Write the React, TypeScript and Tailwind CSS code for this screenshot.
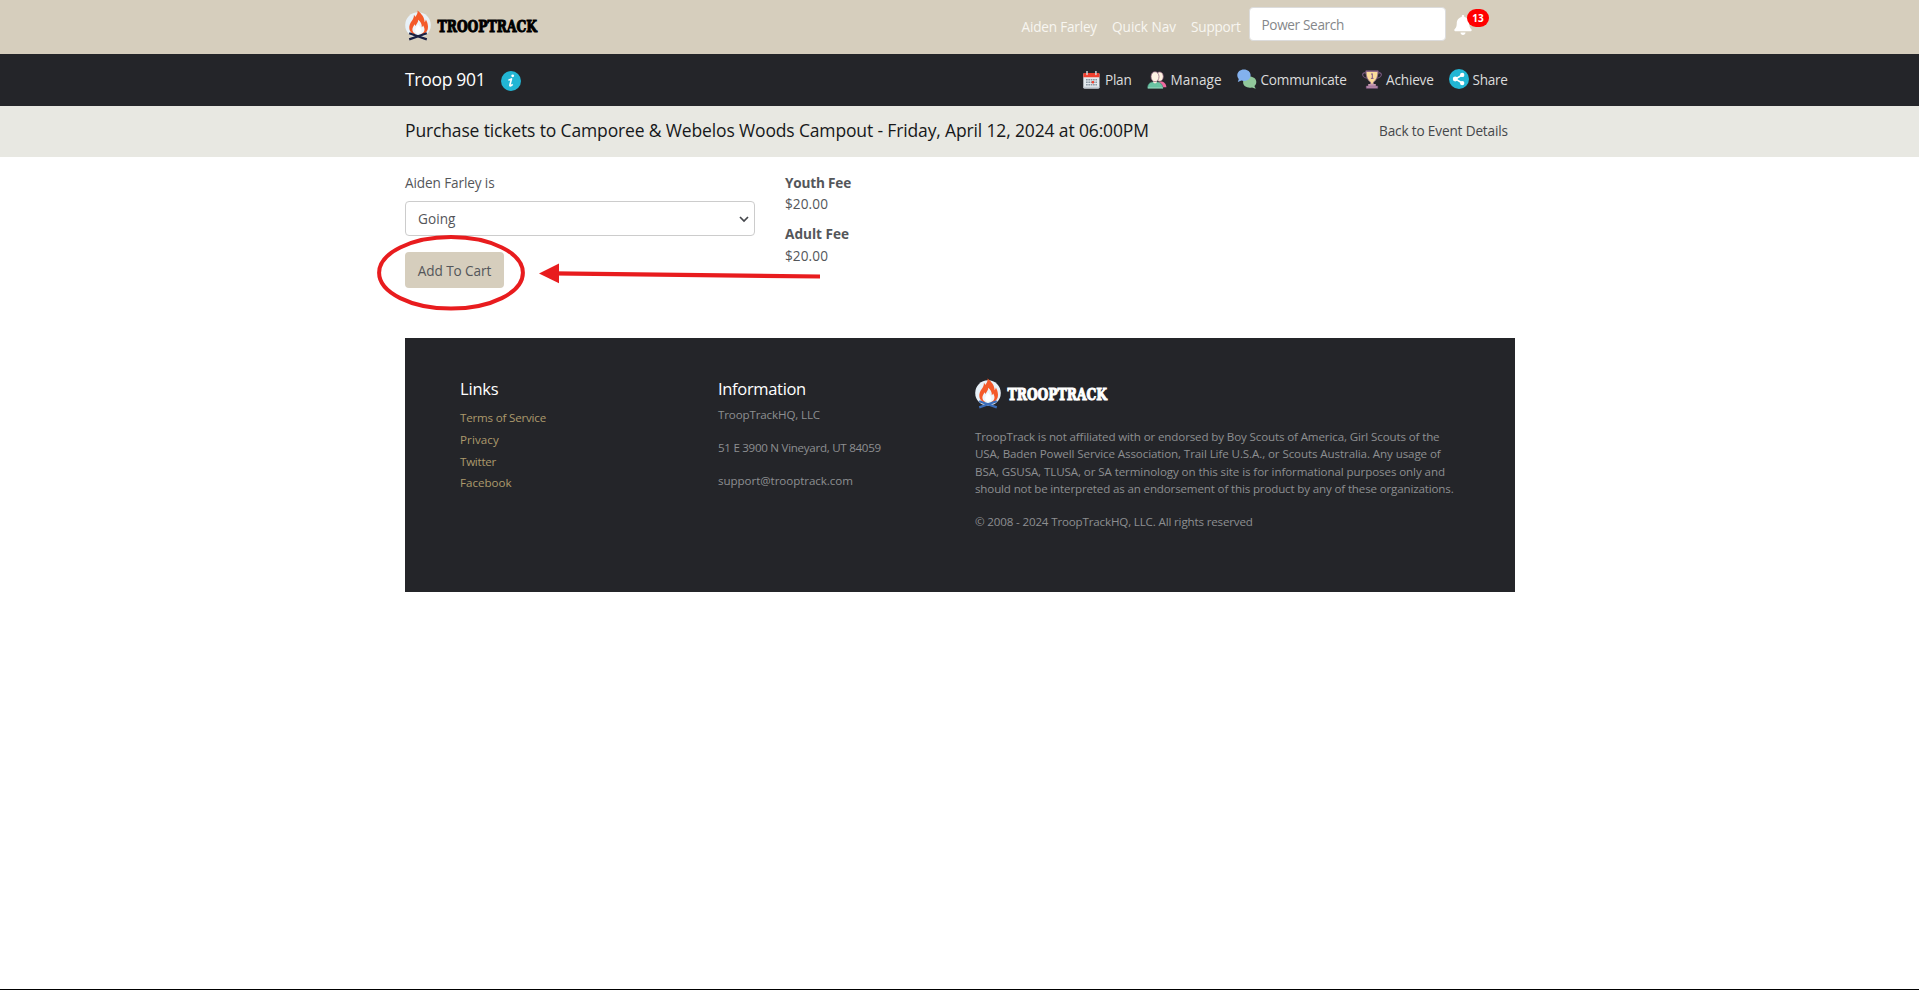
import React from "react";
import { FaBell } from "react-icons/fa";

function Logo({ ink, logs }: { ink: string; logs: string }) {
  return (
    <svg width="140" height="34" viewBox="0 0 140 34" className="block shrink-0">
      <circle cx="13" cy="17" r="12.8" fill="#e8f1f8" />
      <path
        d="M12.6 2.4c.4 2.8-1.2 4.8-2.4 6.7-.3-1.1-.7-1.6-1.3-2 .2 2.3-.8 4-2 5.700-1.700 2.300-3.100 5-2.500 8.200.3 1.900 1.600 4 3.800 4.900h10.700c2.400-1.300 4.200-3.700 4.100-7.200-.1-2.800-1-5-2.100-7.200-.2 1.200-.6 2-1.300 2.700.1-4.600-3.100-8.700-7-11.800Z"
        fill="#f45a2a"
      />
      <path
        d="M13.200 11.800c.2 2.400-1.800 4.100-2.700 6.200-.4-.6-.6-1.100-.7-1.800-1.500 2-2.900 4.300-2.300 6.400.4 1.700 1.600 2.900 3.200 3.400h5.500c2-.7 3.300-2.300 3.300-4.500 0-1.500-.6-2.900-1.300-4.100-.4.900-.8 1.400-1.400 1.800.2-3.100-1.200-5.600-3.600-7.400Z"
        fill="#eef5fa"
      />
      <path d="M13.200 16.500c-2.200 3-3.600 5.200-2.900 7 .5 1.400 1.700 2 3 2s2.700-.7 3.100-2.200c.5-1.900-1.200-4-3.200-6.800Z" fill="#fff" />
      <path d="M4.200 25.200 21.800 31.400M21.800 25.200 4.200 31.400" stroke={logs} strokeWidth="2.200" />
      <text
        x="32.500"
        y="23.800"
        textLength="99.500"
        lengthAdjust="spacingAndGlyphs"
        fill={ink}
        stroke={ink}
        strokeWidth="1.150"
        className="font-['DejaVu_Serif'] text-[17.500px] font-bold"
      >
        TROOPTRACK
      </text>
    </svg>
  );
}

const InfoIcon = () => (
  <svg width="20" height="20" viewBox="0 0 20 20">
    <circle cx="10" cy="10" r="10" fill="#22b6d4" />
    <circle cx="11.700" cy="4.800" r="1.400" fill="#fff" />
    <path d="M7.400 9.100c1.300-.3 2.200-.8 3.100-1.200L8.900 14c-.3 1.400.5 1.600 2.800-.6" fill="none" stroke="#fff" strokeWidth="1.600" strokeLinejoin="round" />
  </svg>
);

const CalendarIcon = () => (
  <svg width="17" height="18" viewBox="0 0 17 18">
    <rect x=".3" y="2" width="16.200" height="15.500" rx="1.400" fill="#e4eaee" />
    <path d="M.3 6.200V3.200C.3 2.400.9 1.900 1.600 1.900h13.600c.7 0 1.300.5 1.300 1.300v3Z" fill="#f0402f" />
    <path d="M.3 15.800h16.200v.6c0 .7-.5 1.200-1.200 1.200H1.500c-.7 0-1.200-.5-1.200-1.200Z" fill="#c3ccd3" />
    <path d="M4 .4v3.200M12.900.4v3.200" stroke="#cfd8dd" strokeWidth="1.500" strokeLinecap="round" />
    <path d="M3 8.700h11M3 11.200h11M3 13.700h11" stroke="#8a97a2" strokeWidth="1.500" strokeDasharray="1.700 .65" />
    <rect x="8.700" y="10.100" width="2.300" height="2.300" fill="#f0402f" />
  </svg>
);

const PeopleIcon = () => (
  <svg width="20" height="18" viewBox="0 0 20 18">
    <path d="M9 16c0-4 2-5.600 4.800-5.600s5.400 2 5.600 5.800H9Z" fill="#ef6aa0" />
    <ellipse cx="12.700" cy="5.600" rx="3.600" ry="4.700" fill="#fdf0df" stroke="#8a5a78" strokeWidth=".7" />
    <path d="M.6 17.200c0-4.200 2.300-6 5-6.300h4.800c2.900.3 5.400 2.300 5.600 6.300Z" fill="#69c3a3" stroke="#45806f" strokeWidth=".6" />
    <path d="M6.200 9h3.600v2.600c-.9 1.100-2.700 1.100-3.600 0Z" fill="#fdf0df" />
    <ellipse cx="8" cy="5.700" rx="4" ry="5" fill="#fdf3e4" stroke="#8a5a78" strokeWidth=".7" />
    <path d="M1 16.900h15" stroke="#a4e0c8" strokeWidth=".9" />
  </svg>
);

const ChatIcon = () => (
  <svg width="20" height="20" viewBox="0 0 20 20">
    <path d="M12.400 7.500c4 0 6.900 2.300 6.900 5.500 0 1.700-.7 3-1.900 4l1.300 2.800-3.700-1.400c-4.700 1-8.900-1.400-8.900-5.200 0-3.300 2.700-5.700 6.300-5.700Z" fill="#91c89b" />
    <path d="M6.900.5c3.800 0 6.700 2.400 6.700 5.700 0 3.400-2.900 5.800-6.700 5.800-.9 0-1.800-.1-2.500-.4L.8 13l1-3C.8 9 .3 7.700.3 6.200.3 2.900 3.200.5 6.900.5Z" fill="#83b1ee" />
  </svg>
);

const TrophyIcon = () => (
  <svg width="20" height="19" viewBox="0 0 20 19">
    <path d="M4.500 3.300C3 2.400.9 2.700.7 4.300.5 6.300 2.800 8 5.500 8.300M15.500 3.300c1.500-.9 3.600-.6 3.800 1 .2 2-2.100 3.700-4.800 4" fill="none" stroke="#7f5c86" strokeWidth="1.100" />
    <path d="M4 1.200h12c0 5.300-1.500 9-4.600 11v2H8.600v-2C5.500 10.200 4 6.500 4 1.200Z" fill="#fbdc9b" stroke="#8f688c" strokeWidth=".8" />
    <path d="M3.600 1.200h12.800" stroke="#8f688c" strokeWidth="1.300" />
    <path d="M9 4.300 10.300 3.700v4.600M8.900 8.400h2.600" fill="none" stroke="#80588a" strokeWidth="1" />
    <path d="M6.200 14h7.600v2H6.200Z" fill="#c79ab0" />
    <path d="M4.300 16h11.400v2.300H4.300Z" fill="#b98aa8" stroke="#80588a" strokeWidth=".5" />
  </svg>
);

const ShareIcon = () => (
  <svg width="20" height="20" viewBox="0 0 20 20">
    <circle cx="10" cy="10" r="10" fill="#22b6d4" />
    <path d="M13.200 6 6.400 10l6.800 4" fill="none" stroke="#fff" strokeWidth="1.500" />
    <circle cx="13.200" cy="5.900" r="2.200" fill="#fff" />
    <circle cx="6.200" cy="10" r="2.400" fill="#fff" />
    <circle cx="13.200" cy="14.100" r="2.200" fill="#fff" />
  </svg>
);

const menu = [
  { label: "Plan", icon: <CalendarIcon />, slot: "w-[64px]", gap: "w-[22px]", track: "tracking-[-0.25px]", up: "pb-[1px]" },
  { label: "Manage", icon: <PeopleIcon />, slot: "w-[90px]", gap: "w-[23.500px]", track: "tracking-[0.1px]", up: "pb-[1px]" },
  { label: "Communicate", icon: <ChatIcon />, slot: "w-[125px]", gap: "w-[23.500px]", track: "tracking-[-0.22px]", up: "pb-[2px]" },
  { label: "Achieve", icon: <TrophyIcon />, slot: "w-[87px]", gap: "w-[24px]", track: "tracking-[-0.18px]", up: "pb-[2px]" },
  { label: "Share", icon: <ShareIcon />, slot: "w-[66px]", gap: "w-[23.500px]", track: "tracking-[-0.3px]", up: "pb-[2px]" },
];

export default function App() {
  return (
    <div className="flex h-screen flex-col border-b border-black bg-white font-['Open_Sans',sans-serif] text-[13.600px] text-[#54565a]">
      <header className="h-[54px] bg-[#d6cebd] pl-[405px]">
        <div className="flex w-[1110px] items-start text-[#f8f6f1]">
          <div className="pt-[8px]">
            <Logo ink="#000000" logs="#1b2142" />
          </div>
          <nav className="ml-auto flex leading-[53px] whitespace-nowrap">
            <a className="w-[90.500px] tracking-[-0.2px]">Aiden Farley</a>
            <a className="w-[79px]">Quick Nav</a>
            <a className="w-[58px] tracking-[-0.2px]">Support</a>
          </nav>
          <div className="mt-[7px] h-[34px] w-[197px] rounded-[4px] border border-[#dcdcdc] bg-white pl-[11.500px] leading-[34px] tracking-[-0.35px] text-[#85878a]">
            Power Search
          </div>
          <div className="relative h-[54px] w-[69px] pt-[15px] pl-[8px]">
            <FaBell className="h-[20px] w-[18px] text-white" />
            <span className="absolute top-[9px] left-[21px] h-[18px] w-[22px] rounded-full bg-[#ff0000] text-center text-[10px] leading-[18px] font-bold text-white">
              13
            </span>
          </div>
        </div>
      </header>

      <div className="h-[52px] bg-[#242529] pl-[405px]">
        <div className="flex h-[52px] w-[1110px] items-start">
          <span className="w-[96px] text-[17.500px] leading-[50px] tracking-[-0.29px] text-white">Troop 901</span>
          <span className="pt-[17px]">
            <InfoIcon />
          </span>
          <nav className="ml-auto flex leading-[52px] text-[#dcdcdc]">
            {menu.map((m) => (
              <a key={m.label} className={`flex items-center ${m.slot}`}>
                <span className={`shrink-0 ${m.gap} ${m.up}`}>{m.icon}</span>
                <span className={m.track}>{m.label}</span>
              </a>
            ))}
          </nav>
        </div>
      </div>

      <div className="h-[51px] bg-[#e8e8e2] pl-[405px]">
        <div className="flex w-[1110px] items-start justify-between whitespace-nowrap">
          <h1 className="text-[17.500px] leading-[49px] tracking-[-0.145px] text-[#17181a]">
            Purchase tickets to Camporee &amp; Webelos Woods Campout - Friday, April 12, 2024 at 06:00PM
          </h1>
          <a className="w-[136px] leading-[50px] tracking-[-0.15px] text-[#45474a]">Back to Event Details</a>
        </div>
      </div>

      <main className="relative ml-[405px] flex h-[181px] w-[1110px] items-start pt-[16px]">
        <div className="mr-[30px] w-[350px]">
          <label className="block leading-[20px] tracking-[-0.12px]">Aiden Farley is</label>
          <div className="mt-[8px] flex h-[35px] items-center justify-between rounded-[4px] border border-[#cccccc] pr-[5px] pl-[12px]">
            <span className="pt-[2px] tracking-[0.05px]">Going</span>
            <svg width="10" height="8" viewBox="0 0 10 8" fill="none" stroke="#45474c" strokeWidth="1.700">
              <path d="M1 2 5 6 9 2" />
            </svg>
          </div>
          <button className="mt-[16px] block h-[36px] w-[99px] rounded-[4px] bg-[#d6cebd] pt-[1px] leading-[36px] tracking-[-0.08px]">
            Add To Cart
          </button>
        </div>
        <dl className="-mt-[1px] leading-[21px]">
          <dt className="font-bold tracking-[-0.19px]">Youth Fee</dt>
          <dd className="tracking-[0.1px]">$20.00</dd>
          <dt className="mt-[9px] font-bold">Adult Fee</dt>
          <dd className="mt-[1px] tracking-[0.1px]">$20.00</dd>
        </dl>
        <svg className="pointer-events-none absolute top-[73px] left-[-32px]" width="460" height="85" viewBox="0 0 460 85">
          <ellipse cx="78" cy="42.800" rx="71.900" ry="35.800" fill="none" stroke="#e81c1e" strokeWidth="4" />
          <path d="M180 43.300 447 46.500" stroke="#e81c1e" strokeWidth="4.200" />
          <path d="M166 43.500 186 33.500V53.300Z" fill="#e81c1e" />
        </svg>
      </main>

      <footer className="ml-[405px] flex h-[254px] w-[1110px] items-start bg-[#242529] pt-[40px] pl-[55px] text-[11.600px] whitespace-nowrap text-[#8d8f91]">
        <div className="w-[258px]">
          <h2 className="pt-[1px] text-[16.500px] leading-[20px] tracking-[-0.18px] text-white">Links</h2>
          <ul className="mt-[8px] leading-[21.800px] text-[#ac9a6c]">
            <li className="tracking-[-0.2px]">Terms of Service</li>
            <li className="tracking-[0.1px]">Privacy</li>
            <li className="tracking-[-0.25px]">Twitter</li>
            <li>Facebook</li>
          </ul>
        </div>
        <div className="w-[257px] leading-[18px]">
          <h2 className="pt-[1px] text-[16.500px] leading-[20px] tracking-[-0.33px] text-white">Information</h2>
          <p className="mt-[6.500px] tracking-[-0.14px]">TroopTrackHQ, LLC</p>
          <p className="mt-[15.200px] tracking-[-0.29px]">51 E 3900 N Vineyard, UT 84059</p>
          <p className="mt-[15.200px] tracking-[-0.06px]">support@trooptrack.com</p>
        </div>
        <div className="leading-[17.500px]">
          <div className="-mt-[2px]">
            <Logo ink="#ffffff" logs="#3c6db8" />
          </div>
          <p className="mt-[17.500px]">
            <span className="block tracking-[-0.14px]">TroopTrack is not affiliated with or endorsed by Boy Scouts of America, Girl Scouts of the</span>
            <span className="block tracking-[-0.105px]">USA, Baden Powell Service Association, Trail Life U.S.A., or Scouts Australia. Any usage of</span>
            <span className="block tracking-[-0.1px]">BSA, GSUSA, TLUSA, or SA terminology on this site is for informational purposes only and</span>
            <span className="block tracking-[-0.16px]">should not be interpreted as an endorsement of this product by any of these organizations.</span>
          </p>
          <p className="mt-[15.300px] tracking-[-0.163px]">© 2008 - 2024 TroopTrackHQ, LLC. All rights reserved</p>
        </div>
      </footer>
    </div>
  );
}
